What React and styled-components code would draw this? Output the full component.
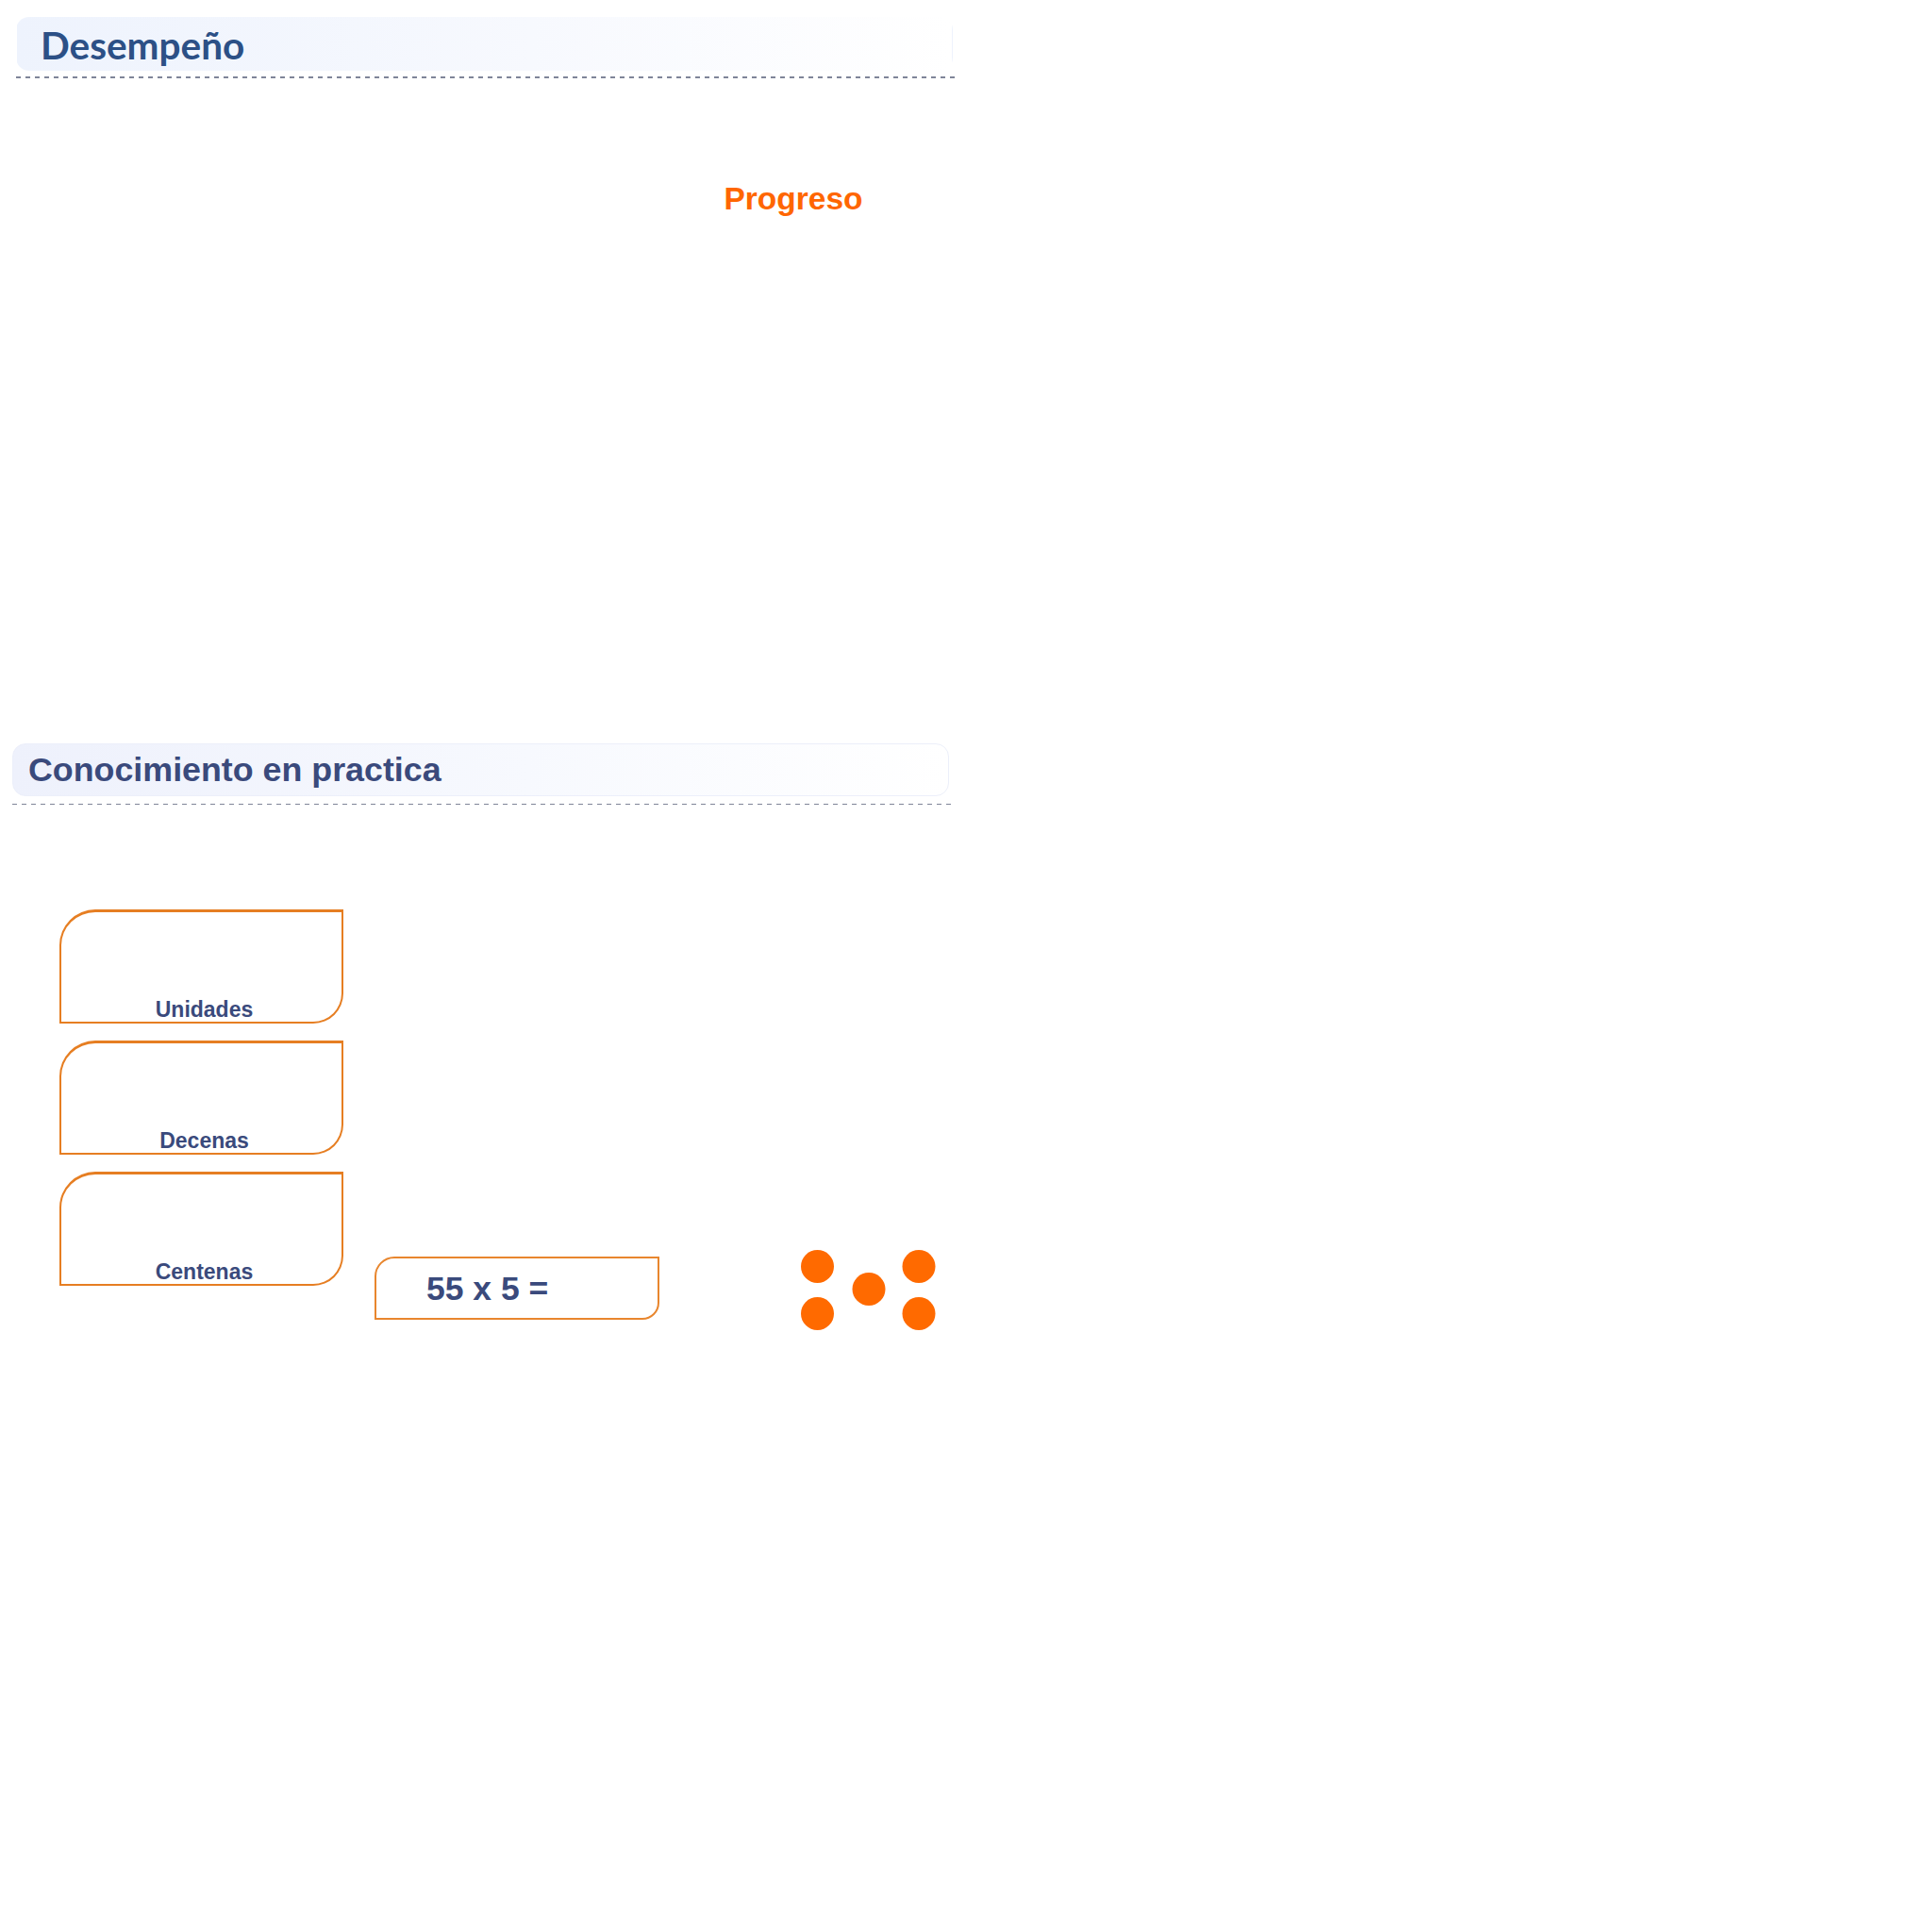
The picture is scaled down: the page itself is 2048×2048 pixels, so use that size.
import React from "react";
import styled, { createGlobalStyle } from "styled-components";

const Global = createGlobalStyle`
  html, body { margin: 0; padding: 0; background: #ffffff; }
  body { font-family: "Liberation Sans", Arial, sans-serif; }
`;

const Page = styled.div`
  display: flex;
  flex-direction: column;
  width: 1040px;
`;

const Section = styled.section`
  display: flex;
  flex-direction: column;
  width: 999px;
  margin-left: ${(p) => p.$left}px;
  margin-top: ${(p) => p.$top || 0}px;
`;

const HeaderBox = styled.div`
  display: flex;
  align-items: center;
  box-sizing: border-box;
  height: ${(p) => p.$h}px;
  margin-right: 6px;
  padding-left: ${(p) => p.$pad}px;
  padding-top: ${(p) => p.$shift || 0}px;
  border-radius: 14px;
  border: 1px solid ${(p) => p.$border || "transparent"};
  background: linear-gradient(90deg, ${(p) => p.$from} 0%, #f7f9fe 55%, #ffffff 100%);
`;

const LatoTitle = styled.h1`
  margin: 0;
  font-family: Lato, "Liberation Sans", sans-serif;
  font-weight: 700;
  font-size: 40.5px;
  line-height: 1;
  color: #2c5086;
`;

const ArialTitle = styled.h2`
  margin: 0;
  font-family: "Liberation Sans", Arial, sans-serif;
  font-weight: 700;
  font-size: 35.8px;
  line-height: 1;
  color: #3a4a7c;
`;

const Dashed = styled.div`
  height: 1.5px;
  margin-top: ${(p) => p.$gap}px;
  background: repeating-linear-gradient(
    90deg,
    #7f8598 0px,
    #7f8598 5px,
    transparent 5px,
    transparent 10px
  );
`;

const ChartArea = styled.div`
  display: grid;
  grid-template-columns: 1fr 330px 10px;
  height: 705px;
`;

const ChartTitle = styled.div`
  grid-column: 2;
  margin-top: 108px;
  text-align: center;
  font-family: "Liberation Sans", Arial, sans-serif;
  font-weight: 700;
  font-size: 33.5px;
  line-height: 40px;
  color: #ff6600;
`;

const PracticeRow = styled.div`
  display: flex;
  align-items: flex-start;
  padding: 111px 0 0 50px;
`;

const CardColumn = styled.div`
  display: flex;
  flex-direction: column;
  gap: 18px;
  width: 301px;
`;

const PlaceCard = styled.div`
  box-sizing: border-box;
  height: 121px;
  display: flex;
  align-items: flex-end;
  justify-content: center;
  padding: 0 0 1px 6px;
  border: 2px solid #e67e22;
  border-top-width: 3px;
  border-radius: 38px 0 32px 0;
  font-family: "Liberation Sans", Arial, sans-serif;
  font-weight: 700;
  font-size: 23px;
  line-height: 24px;
  color: #3a4a7c;
`;

const EquationBox = styled.div`
  box-sizing: border-box;
  width: 302px;
  height: 67px;
  margin: 368px 0 0 33px;
  display: flex;
  align-items: center;
  padding-left: 53px;
  padding-top: 2px;
  border: 2px solid #e8862e;
  border-radius: 21px 0 18px 0;
  font-family: "Liberation Sans", Arial, sans-serif;
  font-weight: 700;
  font-size: 35.5px;
  color: #3a4a7c;
`;

const DotsWrap = styled.div`
  margin: 361px 0 0 150px;
  display: flex;
`;

const dots = [
  [17.5, 17.5],
  [17.5, 67.5],
  [72, 41.5],
  [125, 17.5],
  [125, 67.5],
];

function Dots() {
  return (
    <DotsWrap>
      <svg width="143" height="86" viewBox="0 0 143 86">
        {dots.map(([cx, cy], i) => (
          <circle key={i} cx={cx} cy={cy} r="17.5" fill="#ff6a00" />
        ))}
      </svg>
    </DotsWrap>
  );
}

export default function App() {
  return (
    <Page>
      <Global />
      <Section $left={17} $top={18}>
        <HeaderBox $h={57} $pad={25} $shift={4} $from="#eef3fd">
          <LatoTitle>Desempeño</LatoTitle>
        </HeaderBox>
        <Dashed $gap={6} />
        <ChartArea>
          <ChartTitle>Progreso</ChartTitle>
        </ChartArea>
      </Section>
      <Section $left={13}>
        <HeaderBox $h={56} $pad={16} $shift={2} $from="#eef1fc" $border="#eceffa">
          <ArialTitle>Conocimiento en practica</ArialTitle>
        </HeaderBox>
        <Dashed $gap={8} />
        <PracticeRow>
          <CardColumn>
            <PlaceCard>Unidades</PlaceCard>
            <PlaceCard>Decenas</PlaceCard>
            <PlaceCard>Centenas</PlaceCard>
          </CardColumn>
          <EquationBox>55 x 5 =</EquationBox>
          <Dots />
        </PracticeRow>
      </Section>
    </Page>
  );
}
